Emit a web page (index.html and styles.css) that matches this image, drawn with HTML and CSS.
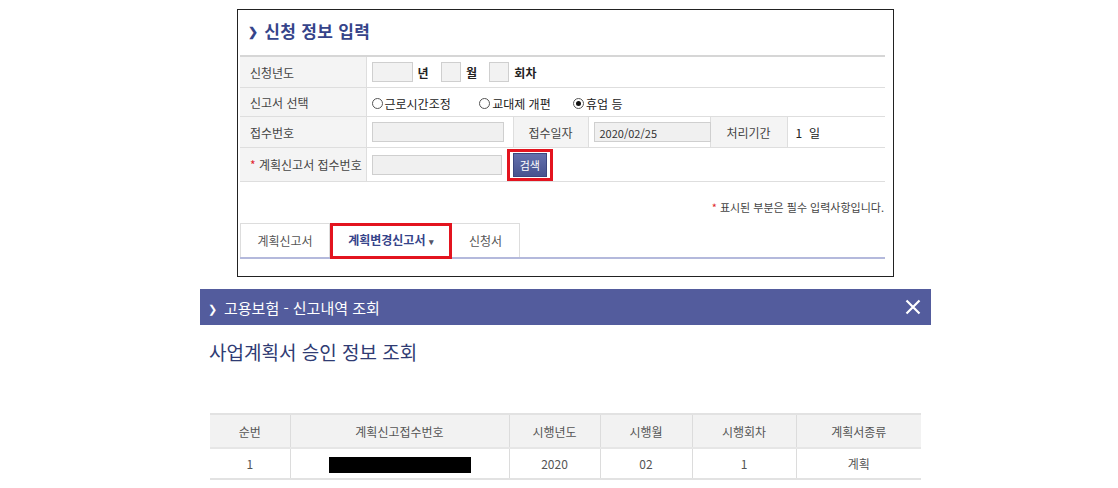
FILE: index.html
```html
<!DOCTYPE html>
<html lang="ko">

<head>
    <meta charset="UTF-8">
    <title>신청 정보 입력</title>
    <link rel="stylesheet" href="styles.css">
</head>

<body>
    <div class="panel">
        <h2 class="panel-title"><span class="chev">&#x276F;</span>신청 정보 입력</h2>

        <table class="form-table">
            <colgroup>
                <col style="width:126px">
                <col style="width:147px">
                <col style="width:75px">
                <col style="width:122px">
                <col style="width:77px">
                <col>
            </colgroup>
            <tr class="row-year">
                <th>신청년도</th>
                <td colspan="5">
                    <span class="box box-wide"></span><span class="unit">년</span>
                    <span class="box"></span><span class="unit">월</span>
                    <span class="box"></span><span class="unit">회차</span>
                </td>
            </tr>
            <tr class="row-radio">
                <th>신고서 선택</th>
                <td colspan="5">
                    <span class="radio"></span><span class="radio-label">근로시간조정</span>
                    <span class="radio"></span><span class="radio-label">교대제 개편</span>
                    <span class="radio checked"></span><span class="radio-label">휴업 등</span>
                </td>
            </tr>
            <tr class="row-num">
                <th>접수번호</th>
                <td><span class="field field-num"></span></td>
                <th class="center">접수일자</th>
                <td><span class="field field-date">2020/02/25</span></td>
                <th class="center">처리기간</th>
                <td class="days">1 &nbsp;일</td>
            </tr>
            <tr class="row-plan">
                <th><span class="req">*</span> 계획신고서 접수번호</th>
                <td colspan="5">
                    <span class="field field-plan"></span>
                    <span class="highlight"><button class="search-btn">검색</button></span>
                </td>
            </tr>
        </table>

        <p class="note"><span class="req">*</span> 표시된 부분은 필수 입력사항입니다.</p>

        <div class="tabs">
            <div class="tab">계획신고서</div>
            <div class="tab active">계획변경신고서 <span class="caret">&#9662;</span></div>
            <div class="tab">신청서</div>
        </div>
    </div>

    <div class="popup">
        <div class="popup-bar">
            <span class="bar-title"><span class="chev-small">&#x276F;</span>고용보험 - 신고내역 조회</span>
            <svg class="close" width="16" height="16" viewBox="0 0 16 16">
                <path d="M1.5 1.5 L14.5 14.5 M14.5 1.5 L1.5 14.5" stroke="#fff" stroke-width="2.2" fill="none" />
            </svg>
        </div>
        <h3 class="popup-title">사업계획서 승인 정보 조회</h3>

        <table class="list-table">
            <colgroup>
                <col style="width:80px">
                <col style="width:219px">
                <col style="width:91px">
                <col style="width:92px">
                <col style="width:104px">
                <col>
            </colgroup>
            <tr>
                <th>순번</th>
                <th>계획신고접수번호</th>
                <th>시행년도</th>
                <th>시행월</th>
                <th>시행회차</th>
                <th>계획서종류</th>
            </tr>
            <tr>
                <td>1</td>
                <td><span class="redacted"></span></td>
                <td>2020</td>
                <td>02</td>
                <td>1</td>
                <td>계획</td>
            </tr>
        </table>
    </div>
</body>

</html>
```

FILE: styles.css
```css
body {
    margin: 0;
    padding-top: 9px;
    background: #fff;
    font-family: "Noto Sans CJK KR", "Noto Sans", sans-serif;
    color: #333;
}

.panel {
    margin-left: 237px;
    width: 657px;
    height: 268px;
    border: 1px solid #222;
    padding: 0 8px 0 2px;
    box-sizing: border-box;
}

.panel-title {
    margin: 0;
    height: 45px;
    line-height: 42px;
    padding-left: 8px;
    font-size: 17px;
    font-weight: bold;
    color: #36448a;
    letter-spacing: 0.3px;
}

.chev {
    font-size: 12px;
    margin-right: 6px;
    position: relative;
    top: -2px;
}

.form-table {
    width: 645px;
    border-collapse: collapse;
    border-top: 2px solid #d6d6d6;
    font-size: 12px;
    table-layout: fixed;
}

.form-table th,
.form-table td {
    border-bottom: 1px solid #dedede;
    padding: 0;
    height: 28px;
}

.form-table th {
    background: #f4f4f4;
    font-weight: normal;
    text-align: left;
    padding-left: 10px;
    color: #444;
    border-right: 1px solid #dedede;
}

.form-table th.center {
    text-align: center;
    padding-left: 0;
}

.form-table td {
    padding-left: 5px;
    color: #222;
}

.row-year td,
.row-year th { height: 30px; }

.row-num td,
.row-num th { height: 30px; }

.row-plan td,
.row-plan th { height: 33px; }

.form-table td + th {
    border-left: 1px solid #dedede;
}

.box {
    display: inline-block;
    width: 20px;
    height: 20px;
    border: 1px solid #cfcfcf;
    background: #f2f2f2;
    vertical-align: middle;
    box-sizing: border-box;
}

.box-wide {
    width: 41px;
}

.unit {
    display: inline-block;
    margin: 0 9px 0 5px;
    vertical-align: middle;
    font-weight: bold;
    font-size: 12px;
}

.radio {
    display: inline-block;
    width: 11px;
    height: 11px;
    border: 1px solid #555;
    border-radius: 50%;
    box-sizing: border-box;
    vertical-align: middle;
    position: relative;
    margin-right: 2px;
}

.radio.checked::after {
    content: "";
    position: absolute;
    left: 2px;
    top: 2px;
    width: 5px;
    height: 5px;
    border-radius: 50%;
    background: #111;
}

.radio-label {
    display: inline-block;
    vertical-align: middle;
    margin-right: 19px;
}

.radio-label:nth-of-type(2) {
    margin-right: 25px;
}

.field {
    display: inline-block;
    height: 20px;
    line-height: 20px;
    border: 1px solid #cfcfcf;
    background: #f0f0f0;
    vertical-align: middle;
    box-sizing: border-box;
    font-size: 11px;
    padding-left: 5px;
    color: #333;
}

.field-num { width: 132px; }
.field-date { width: 117px; }
.field-plan { width: 130px; }

.days {
    padding-left: 8px !important;
}

.req {
    color: #e0262e;
}

.highlight {
    display: inline-block;
    border: 3px solid #e3141f;
    padding: 1px 3px;
    margin-left: 2px;
    vertical-align: middle;
}

.search-btn {
    display: block;
    width: 34px;
    height: 24px;
    border: 1px solid #3b477f;
    background: linear-gradient(#6370ad, #47538f);
    color: #fff;
    font-family: inherit;
    font-size: 11px;
    padding: 0;
    margin: 0;
}

.note {
    margin: 17px 0 0;
    text-align: right;
    font-size: 11px;
    color: #444;
    padding-right: 1px;
}

.tabs {
    display: flex;
    margin-top: 8px;
    border-bottom: 2px solid #b4b9dc;
    width: 645px;
}

.tab {
    height: 34px;
    line-height: 34px;
    border: 1px solid #ddd;
    border-bottom: none;
    font-size: 12px;
    color: #555;
    text-align: center;
    width: 90px;
    box-sizing: border-box;
}

.tab + .tab {
    border-left: none;
}

.tab.active {
    width: 122px;
    border: 3px solid #e3141f;
    line-height: 28px;
    height: 36px;
    margin-bottom: -2px;
    color: #36448a;
    font-weight: bold;
    background: #fff;
}

.tab:last-child {
    width: 68px;
}

.caret {
    font-size: 9px;
    color: #556;
}

.popup {
    margin: 12px 0 0 200px;
    width: 731px;
}

.popup-bar {
    height: 36px;
    background: #535c9d;
    display: flex;
    align-items: center;
    justify-content: space-between;
    padding: 0 10px 0 8px;
    color: #fff;
    font-size: 15px;
}

.chev-small {
    font-size: 11px;
    margin-right: 7px;
    position: relative;
    top: -1px;
}

.popup-title {
    margin: 13px 0 0 9px;
    font-size: 19px;
    font-weight: normal;
    color: #2f3b73;
    height: 75px;
}

.list-table {
    margin-left: 10px;
    width: 711px;
    border-collapse: collapse;
    table-layout: fixed;
    border-top: 2px solid #e2e2e2;
    border-bottom: 2px solid #e2e2e2;
    font-size: 12px;
}

.list-table th,
.list-table td {
    text-align: center;
    border-left: 1px solid #dcdcdc;
    color: #555;
    padding: 0;
}

.list-table th:first-child,
.list-table td:first-child {
    border-left: none;
}

.list-table th {
    height: 32px;
    background: #f2f2f2;
    font-weight: normal;
    border-bottom: 2px solid #e6e6e6;
}

.list-table td {
    height: 29px;
}

.redacted {
    display: inline-block;
    width: 142px;
    height: 16px;
    background: #000;
    vertical-align: middle;
}
```
